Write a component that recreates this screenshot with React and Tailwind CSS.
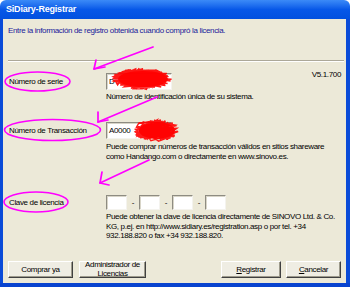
import React from "react";

function rng(seed) {
  let a = seed;
  return function () {
    a |= 0;
    a = (a + 0x6d2b79f5) | 0;
    let t = Math.imul(a ^ (a >>> 15), 1 | a);
    t = (t + Math.imul(t ^ (t >>> 7), 61 | t)) ^ t;
    return ((t ^ (t >>> 14)) >>> 0) / 4294967296;
  };
}

function scribblePoints(cx, cy, rx, ry, n, seed) {
  const r = rng(seed);
  const pts = [];
  for (let i = 0; i < n; i++) {
    const ang = r() * Math.PI * 2;
    const rad = Math.sqrt(r());
    const x = cx + Math.cos(ang) * rx * rad;
    const y = cy + Math.sin(ang) * ry * rad;
    pts.push(x.toFixed(1) + "," + y.toFixed(1));
  }
  return pts.join(" ");
}

const S1 = scribblePoints(142, 79, 30, 10.5, 220, 7);
const S2 = scribblePoints(156, 130.5, 23, 11, 180, 11);

function Overlay() {
  const pink = "#FF00FF";
  return (
    <svg
      className="absolute inset-0 pointer-events-none"
      width="350"
      height="287"
      viewBox="0 0 350 287"
    >
      {/* red scribbles */}
      <ellipse cx="143" cy="79" rx="25" ry="8" fill="#FF0000" opacity="0.9" />
      <polyline points={S1} fill="none" stroke="#FF0000" strokeWidth="1.4" opacity="0.9" />
      <ellipse cx="157" cy="130.5" rx="18" ry="8.5" fill="#FF0000" opacity="0.9" />
      <polyline points={S2} fill="none" stroke="#FF0000" strokeWidth="1.4" opacity="0.9" />

      {/* ellipses */}
      <ellipse cx="37.5" cy="81.5" rx="32.5" ry="9.5" fill="none" stroke={pink} strokeWidth="1.6" />
      <ellipse cx="52.5" cy="130" rx="48" ry="10.5" fill="none" stroke={pink} strokeWidth="1.6" />
      <ellipse cx="36" cy="202" rx="32" ry="10" fill="none" stroke={pink} strokeWidth="1.6" />

      {/* arrows */}
      <g fill="none" stroke={pink} strokeWidth="1.7" strokeLinecap="round" strokeLinejoin="round">
        <polyline points="153,47 94,69" />
        <polyline points="96,60 94,69 105,67" />
        <polyline points="157,97 98,122" />
        <polyline points="98,112 98,122 108,120" />
        <polyline points="149,160 100,183" />
        <polyline points="102,172 100,183 109,185" />
      </g>
    </svg>
  );
}

function Field({ children, w = "w-[66px]", h = "h-[17px]" }) {
  return (
    <div
      className={`${w} ${h} bg-white border border-t-[#8E8C82] border-l-[#8E8C82] border-r-[#F4F3EE] border-b-[#F4F3EE] shadow-[inset_1px_1px_0_#D8D5C8] flex items-center pl-[2px] text-[8px] leading-none`}
    >
      {children}
    </div>
  );
}

function Box() {
  return (
    <div className="w-[21px] h-[15px] bg-white border border-t-[#8E8C82] border-l-[#8E8C82] border-r-[#F4F3EE] border-b-[#F4F3EE] shadow-[inset_1px_1px_0_#D8D5C8]" />
  );
}

function Dash() {
  return <div className="w-[12px] flex justify-center items-center text-[8px]">-</div>;
}

function Button({ w, children }) {
  return (
    <div
      className={`${w} h-[17px] bg-[#EFEDE3] border border-t-white border-l-white border-r-[#404040] border-b-[#404040] shadow-[inset_-1px_-1px_0_#9D9A8C] flex items-center justify-center text-center overflow-hidden`}
    >
      {children}
    </div>
  );
}

export default function App() {
  return (
    <div className="w-[350px] h-[287px] relative overflow-hidden font-['Liberation_Sans',Arial,sans-serif] text-[8px] tracking-[-0.35px] text-black">
      {/* title bar */}
      <div className="h-[19px] rounded-t-[6px] bg-gradient-to-b from-[#3B8AF7] via-[#0758E8] to-[#0251DF] flex items-center pl-[6px]">
        <span className="text-white font-bold text-[9px] tracking-[-0.2px] leading-none">
          SiDiary-Registrar
        </span>
      </div>

      <div className="flex h-[264px]">
        <div className="w-[3px] bg-[#0A4BD8]" />
        <div className="flex-1 bg-[#ECE9D8] flex flex-col">
          {/* header */}
          <div className="pt-[7px] pl-[5px] leading-[10px] text-[#22229A]">
            Entre la información de registro obtenida cuando compró la licencia.
          </div>
          <div className="mt-[24px] ml-[5px] mr-[2px] h-[2px] border-t border-t-[#ACA899] border-b border-b-white" />

          {/* row 1 */}
          <div className="flex mt-[11px]">
            <div className="w-[103px] h-[17px] pl-[6px] flex items-center">Número de serie</div>
            <div className="flex-1 flex flex-col">
              <div className="flex justify-between">
                <Field>D</Field>
                <div className="-mt-[3px] pr-[5px] leading-[10px]">V5.1.700</div>
              </div>
              <div className="mt-[2px] leading-[10px]">
                Número de identificación única de su sistema.
              </div>
            </div>
          </div>

          {/* row 2 */}
          <div className="flex mt-[20px]">
            <div className="w-[103px] h-[17px] pl-[6px] flex items-center">Número de Transacción</div>
            <div className="flex-1 flex flex-col">
              <Field>A0000</Field>
              <div className="mt-[3px] leading-[9.5px]">
                Puede comprar números de transacción válidos en sitios shareware
                <br />
                como Handango.com o directamente en www.sinovo.es.
              </div>
            </div>
          </div>

          {/* row 3 */}
          <div className="flex mt-[34px]">
            <div className="w-[103px] h-[15px] pl-[6px] flex items-center">Clave de licencia</div>
            <div className="flex-1 flex flex-col">
              <div className="flex">
                <Box />
                <Dash />
                <Box />
                <Dash />
                <Box />
                <Dash />
                <Box />
              </div>
              <div className="mt-[2px] leading-[9.5px]">
                Puede obtener la clave de licencia directamente de SINOVO Ltd. &amp; Co.
                <br />
                KG, p.ej. en http://www.sidiary.es/registration.asp o por tel. +34
                <br />
                932.188.820 o fax +34 932.188.820.
              </div>
            </div>
          </div>

          {/* buttons */}
          <div className="mt-auto pb-[5px] pl-[5px] pr-[5px] flex items-end">
            <Button w="w-[65px]">Comprar ya</Button>
            <div className="ml-[6px]">
              <Button w="w-[67px]">
                <span className="leading-[8.5px] block">
                  Administrador de
                  <br />
                  Licencias
                </span>
              </Button>
            </div>
            <div className="ml-auto flex gap-[5px]">
              <Button w="w-[60px]">
                <span>
                  <span className="underline">R</span>egistrar
                </span>
              </Button>
              <Button w="w-[55px]">
                <span>
                  <span className="underline">C</span>ancelar
                </span>
              </Button>
            </div>
          </div>
        </div>
        <div className="w-[4px] bg-[#0A4BD8]" />
      </div>
      <div className="h-[4px] bg-[#0843CF]" />

      <Overlay />
    </div>
  );
}
